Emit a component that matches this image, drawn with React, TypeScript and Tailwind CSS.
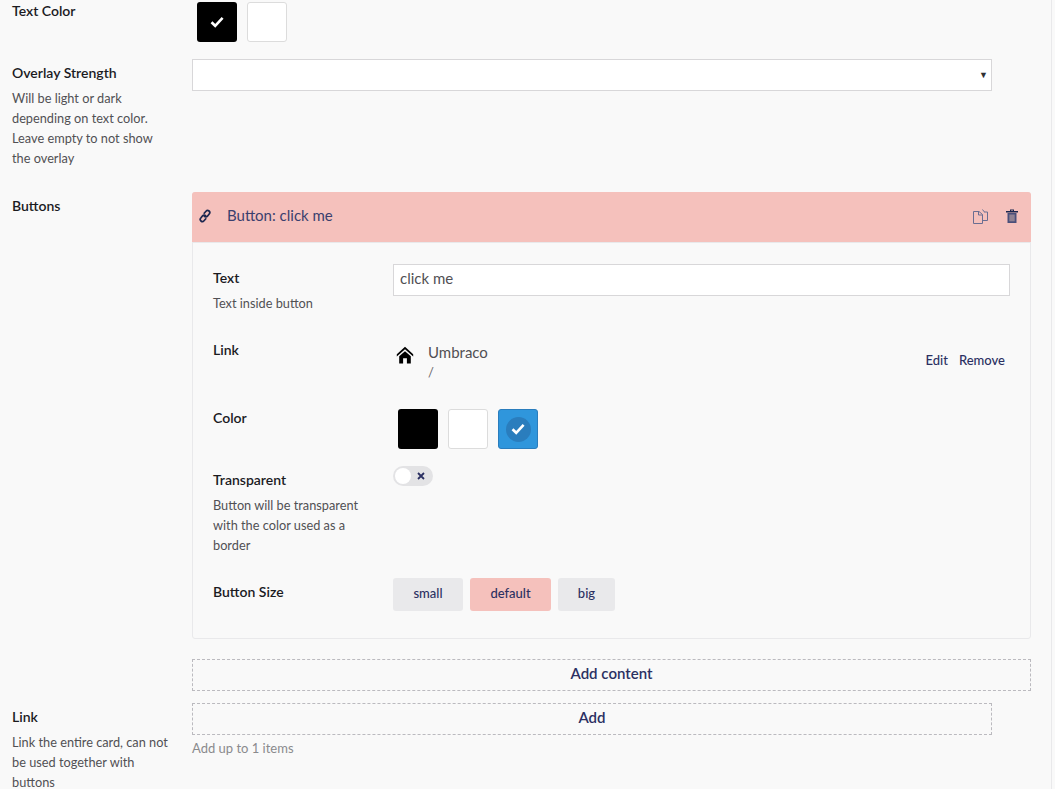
import React from "react";

const navy = "text-[#2b3062]";

function Check() {
  return (
    <svg width="14" height="12" viewBox="0 0 14 12" fill="none" stroke="#fff" strokeWidth="2.6">
      <path d="M1.5 6.2l3.7 3.6L12.6 1.8" />
    </svg>
  );
}

function Label({ title, desc, className = "" }: { title: string; desc?: React.ReactNode; className?: string }) {
  return (
    <div className={className}>
      <div className="text-[14px] leading-[20px] text-[#1b1b1f]" style={{ fontWeight: 600 }}>{title}</div>
      {desc && <div className="mt-[5px] text-[12.75px] leading-[20px] text-[#515054]">{desc}</div>}
    </div>
  );
}

function Swatch({ color, selected, ring }: { color: string; selected?: boolean; ring?: boolean }) {
  return (
    <div className={`w-[40px] h-[40px] rounded-[3px] flex items-center justify-center shrink-0 ${color}`}>
      {selected &&
        (ring ? (
          <div className="w-[25px] h-[25px] rounded-full bg-[#2a7dbd] flex items-center justify-center">
            <Check />
          </div>
        ) : (
          <Check />
        ))}
    </div>
  );
}

export default function App() {
  return (
    <div className="h-[789px] overflow-hidden bg-[#f9f9f9]" style={{ fontFamily: "Lato, sans-serif" }}>
      <div className="h-full w-[1052px] pl-[12px] border-r border-r-[#e9e9eb]">
        {/* Text color */}
        <div className="flex h-[59px]">
          <Label title="Text Color" className="w-[180px] pt-[1px]" />
          <div className="flex gap-[10px] pl-[5px] pt-[2px]">
            <Swatch color="bg-black" selected />
            <Swatch color="bg-white border border-[#dcdcdc]" />
          </div>
        </div>

        {/* Overlay */}
        <div className="flex h-[133px]">
          <Label
            title="Overlay Strength"
            className="w-[180px] pt-[4px]"
            desc={<>Will be light or dark<br />depending on text color.<br />Leave empty to not show<br />the overlay</>}
          />
          <div className="relative w-[800px] h-[32px] bg-white border border-[#d8d7d9]">
            <span className="absolute right-[3px] top-[10px] text-[9px] leading-[10px] text-[#303033]">▼</span>
          </div>
        </div>

        {/* Buttons */}
        <div className="flex h-[511px]">
          <Label title="Buttons" className="w-[180px] pt-[4px]" />
          <div className="w-[839px]">
            <div className="h-[447px] border border-[#e9e9eb] rounded-[3px] flex flex-col">
              <div className={`-m-[1px] h-[51px] shrink-0 bg-[#f5c1bc] rounded-t-[3px] border-b border-b-[#e9e9eb] flex items-center pl-[7px] pr-[13px] ${navy}`}>
                <svg className="mr-[16px] mt-[-2px]" width="12" height="14" viewBox="0 0 12 14" fill="none" stroke="#1b264f" strokeWidth="1.7" strokeLinecap="round">
                  <path d="M5.2 4.2L7 2.2a2.1 2.1 0 0 1 3.2 2.8L8.4 7.2a2.1 2.1 0 0 1-3 .2" />
                  <path d="M6.8 9.8L5 11.8a2.1 2.1 0 0 1-3.2-2.8l1.8-2.2a2.1 2.1 0 0 1 3-.2" />
                </svg>
                <span className="text-[15px] leading-[20px] pb-[4px] text-[#3a3f6e]">Button: click me</span>
                <div className="ml-auto flex items-center gap-[18px] pb-[2px]">
                  <svg width="15" height="15" viewBox="0 0 15 15" fill="none" stroke="#6a6e92" strokeWidth="1">
                    <path d="M0.5 2.5h5.5l3.5 3v9h-9z" />
                    <path d="M5.5 2.5v3.5h4" />
                    <path d="M9.5 0.5l1.5 2v0.5h3.5v8.5h-5" />
                  </svg>
                  <svg width="12" height="14" viewBox="0 0 12 14">
                    <path d="M0 2h12v1.4H0z M4 0.5h4v1.5h-1v-.6h-2v.6H4z" fill="#1b264f" />
                    <path d="M1.5 4h9v10h-9z" fill="#4a4f7a" />
                    <path d="M3.3 5.5h5.4v6.8H3.3z" fill="#8f8192" />
                  </svg>
                </div>
              </div>

              <div className="flex-1 px-[20px] flex flex-col">
                {/* Text */}
                <div className="flex h-[76px] pt-[22px]">
                  <Label title="Text" className="w-[180px] pt-[4px]" desc="Text inside button" />
                  <div className="w-[617px] h-[32px] bg-white border border-[#d8d7d9] px-[6px] text-[15px] leading-[27px] text-[#515054]">click me</div>
                </div>
                {/* Link */}
                <div className="flex h-[78px]">
                  <Label title="Link" className="w-[180px] pt-[22px]" />
                  <div className="w-[617px] flex pt-[24px]">
                    <svg className="ml-[3px] mt-[3px]" width="18" height="19" viewBox="0 0 18 19" fill="#000">
                      <path d="M0.8 9.2L9 1.8l8.2 7.4v2.2L9 4.2 0.8 11.4z" />
                      <path d="M3.2 11.2L9 6.2l5.8 5v7.3h-3.9v-5.2H7.1v5.2H3.2z" />
                    </svg>
                    <div className="ml-[14px] text-[15px] leading-[20px] text-[#515054]">
                      <div>Umbraco</div>
                      <div className="text-[13px] text-[#68676b]">/</div>
                    </div>
                    <div className={`ml-auto mr-[5px] mt-[8px] flex gap-[11px] text-[13px] leading-[20px] ${navy}`} style={{ fontWeight: 500 }}>
                      <span>Edit</span>
                      <span>Remove</span>
                    </div>
                  </div>
                </div>
                {/* Color */}
                <div className="flex h-[62px]">
                  <Label title="Color" className="w-[180px] pt-[12px]" />
                  <div className="flex gap-[10px] pl-[5px] pt-[13px]">
                    <Swatch color="bg-black" />
                    <Swatch color="bg-white border border-[#dcdcdc]" />
                    <Swatch color="bg-[#2f96dc] border border-[#2a7dbd]" selected ring />
                  </div>
                </div>
                {/* Transparent */}
                <div className="flex h-[120px]">
                  <Label
                    title="Transparent"
                    className="w-[180px] pt-[12px]"
                    desc={<>Button will be transparent<br />with the color used as a<br />border</>}
                  />
                  <div className="pt-[8px]">
                    <div className="relative w-[40px] h-[20px] rounded-full bg-[#e3e3e5]">
                      <div className="absolute left-[2px] top-[2px] w-[16px] h-[16px] rounded-full bg-white" />
                      <svg className="absolute right-[8px] top-[6px]" width="8" height="8" viewBox="0 0 8 8" stroke="#2b3062" strokeWidth="1.8">
                        <path d="M1 1l6 6M7 1l-6 6" />
                      </svg>
                    </div>
                  </div>
                </div>
                {/* Size */}
                <div className="flex">
                  <Label title="Button Size" className="w-[180px] pt-[4px]" />
                  <div className={`flex gap-[7px] text-[13px] leading-[20px] ${navy}`} style={{ fontWeight: 500 }}>
                    <div className="w-[70px] h-[33px] rounded-[3px] bg-[#e9e9eb] flex items-center justify-center pb-[3px]">small</div>
                    <div className="w-[81px] h-[33px] rounded-[3px] bg-[#f5c1bc] flex items-center justify-center pb-[3px]">default</div>
                    <div className="w-[57px] h-[33px] rounded-[3px] bg-[#e9e9eb] flex items-center justify-center pb-[3px]">big</div>
                  </div>
                </div>
              </div>
            </div>
            <div className={`mt-[20px] h-[32px] border border-dashed border-[#bbbabf] flex items-center justify-center text-[15px] leading-[20px] pb-[4px] ${navy}`} style={{ fontWeight: 600 }}>
              Add content
            </div>
          </div>
        </div>

        {/* Link */}
        <div className="flex">
          <Label
            title="Link"
            className="w-[180px] pt-[4px]"
            desc={<>Link the entire card, can not<br />be used together with<br />buttons</>}
          />
          <div className="w-[800px]">
            <div className={`h-[32px] border border-dashed border-[#bbbabf] flex items-center justify-center text-[15px] leading-[20px] pb-[4px] ${navy}`} style={{ fontWeight: 600 }}>
              Add
            </div>
            <div className="mt-[3px] text-[13px] leading-[20px] text-[#8a8a8d]">Add up to 1 items</div>
          </div>
        </div>
      </div>
    </div>
  );
}
